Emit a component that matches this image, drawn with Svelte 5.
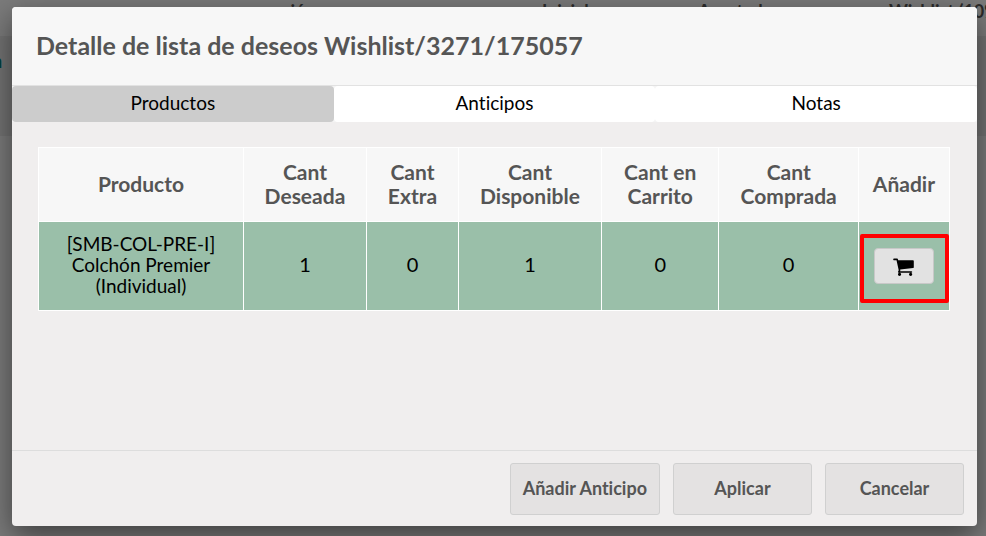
<script>
  const tabs = ['Productos', 'Anticipos', 'Notas'];
  let active = $state('Productos');
  const columns = [
    { label: 'Producto', width: 22.5 },
    { label: 'Cant Deseada', width: 13.5 },
    { label: 'Cant Extra', width: 10.1 },
    { label: 'Cant Disponible', width: 15.7 },
    { label: 'Cant en Carrito', width: 12.9 },
    { label: 'Cant Comprada', width: 15.3 },
    { label: 'Añadir', width: 10 }
  ];
  const quantities = [1, 0, 1, 0, 0];
</script>

<div class="screen">
  <div class="page" aria-hidden="true">
    <div class="line head">
      <span class="word" style:left="248px">creación</span>
      <span class="word" style:left="542px">Inicial</span>
      <span class="word" style:left="698px">Apartado</span>
      <span class="word" style:left="889px">Wishlist (10%)</span>
    </div>
    <div class="line row"><a href="#order" class="ref">n</a></div>
  </div>

  <div class="modal" role="dialog" aria-modal="true" aria-labelledby="title">
    <header><h1 id="title">Detalle de lista de deseos Wishlist/3271/175057</h1></header>
    <div class="tabs" role="tablist">
      {#each tabs as tab}
        <button type="button" role="tab" aria-selected={active === tab} class:active={active === tab} onclick={() => (active = tab)}>{tab}</button>
      {/each}
    </div>
    <main>
      <table>
        <colgroup>
          {#each columns as column}<col style:width="{column.width}%" />{/each}
        </colgroup>
        <thead>
          <tr>{#each columns as column}<th scope="col">{column.label}</th>{/each}</tr>
        </thead>
        <tbody>
          <tr>
            <td>[SMB-COL-PRE-I] Colchón Premier (Individual)</td>
            {#each quantities as quantity}<td class="number">{quantity}</td>{/each}
            <td class="action">
              <button type="button" class="cart" aria-label="Añadir">
                <svg viewBox="0 0 1664 1536" width="21" height="19" aria-hidden="true">
                  <path d="M640 1408q0 52-38 90t-90 38-90-38-38-90 38-90 90-38 90 38 38 90zm896 0q0 52-38 90t-90 38-90-38-38-90 38-90 90-38 90 38 38 90zm128-1088v512q0 24-16.500 42.500t-40.500 21.500l-1044 122q13 60 13 70 0 16-24 64h920q26 0 45 19t19 45-19 45-45 19h-1024q-26 0-45-19t-19-45q0-11 8-31.500t16-36 21.500-40 15.500-29.500l-177-823h-204q-26 0-45-19t-19-45 19-45 45-19h256q16 0 28.500 6.500t19.500 15.500 13 24.500 8 26 5.500 29.500 4.500 26h1201q26 0 45 19t19 45z" />
                </svg>
              </button>
            </td>
          </tr>
        </tbody>
      </table>
    </main>
    <footer>
      <button type="button">Añadir Anticipo</button>
      <button type="button">Aplicar</button>
      <button type="button">Cancelar</button>
    </footer>
  </div>
</div>

<style>
  :global(body) { margin: 0; }
  .screen {
    position: relative;
    box-sizing: border-box;
    display: flex;
    min-height: 100vh;
    padding: 7px 9px 10px 12px;
    overflow: hidden;
    background: #7b7b7b;
    font-family: Lato, sans-serif;
    font-variant-ligatures: none;
    color: #555;
  }
  .page { position: absolute; inset: 0; overflow: hidden; }
  .line { position: relative; }
  .head { height: 36px; }
  .row { height: 100px; background: #737373; }
  .word {
    position: absolute;
    top: 0;
    font-size: 18px;
    line-height: 22px;
    font-weight: 700;
    color: #2b2b2b;
    white-space: nowrap;
  }
  .ref {
    position: absolute;
    top: 14px;
    left: -8px;
    font-size: 18px;
    line-height: 22px;
    font-weight: 700;
    color: #00403b;
    text-decoration: none;
  }
  .modal {
    position: relative;
    flex: 1;
    min-width: 0;
    display: flex;
    flex-direction: column;
    border-radius: 4px;
    background: #f0eeee;
    box-shadow: 0 10px 30px rgba(0, 0, 0, 0.5);
    overflow: hidden;
  }
  header {
    padding: 23px 24px 25px;
    background: #f7f7f7;
    border-bottom: 1px solid #e2e2e2;
  }
  h1 { margin: 0; font-size: 25px; line-height: 30px; font-weight: 700; }
  button { font-family: inherit; font-variant-ligatures: inherit; cursor: pointer; }
  .tabs { display: flex; background: #f4f4f4; }
  .tabs button {
    flex: 1;
    height: 36px;
    padding: 0 0 2px;
    border: 0;
    border-radius: 4px;
    background: #fff;
    color: #000;
    font-size: 19px;
    line-height: 24px;
  }
  .tabs button.active { background: #ccc; }
  main { flex: 1; padding: 25px 27px 25px 26px; }
  table {
    width: 100%;
    table-layout: fixed;
    border-collapse: collapse;
    text-align: center;
  }
  th, td { border: 1px solid #fff; }
  th {
    height: 71px;
    padding: 0 12px 2px;
    background: #f7f7f7;
    font-size: 21px;
    line-height: 24px;
    font-weight: 700;
  }
  td {
    height: 84px;
    padding: 0 20px 4px;
    background: #9abfa9;
    color: #000;
    font-size: 19px;
    line-height: 21px;
  }
  .number { font-size: 20px; }
  .action { position: relative; height: 88px; padding: 0; }
  .action::after {
    content: '';
    position: absolute;
    inset: 12px 0 7px 1px;
    border: 4px solid #f00;
    border-radius: 2px;
    pointer-events: none;
  }
  .cart {
    display: inline-flex;
    align-items: center;
    justify-content: center;
    width: 60px;
    height: 36px;
    padding: 0;
    border: 1px solid #c8c8c8;
    border-radius: 4px;
    background: #e2e2e2;
    color: #000;
    vertical-align: middle;
  }
  footer {
    display: flex;
    justify-content: flex-end;
    gap: 13px;
    padding: 12px 13px 11px;
    border-top: 1px solid #ddd;
  }
  footer button {
    min-width: 139px;
    height: 52px;
    padding: 0 12px 2px;
    border: 1px solid #d0d0d0;
    border-radius: 3px;
    background: #e4e2e2;
    color: #555;
    font-size: 18px;
    line-height: 22px;
    font-weight: 700;
  }
</style>
